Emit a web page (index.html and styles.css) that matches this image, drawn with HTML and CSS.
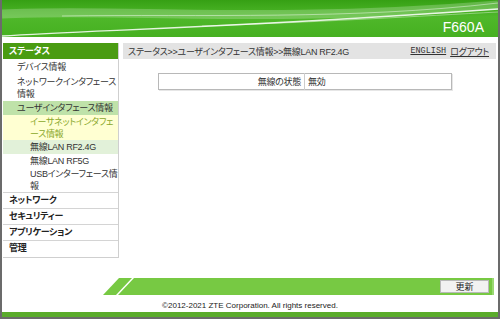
FILE: index.html
```html
<!DOCTYPE html>
<html lang="ja">
<head>
<meta charset="utf-8">
<title>F660A</title>
<link rel="stylesheet" href="styles.css">
</head>
<body>
<div class="frame">
  <header class="top">
    <svg class="swoosh" width="496" height="37" viewBox="0 0 496 37" preserveAspectRatio="none" aria-hidden="true">
      <defs>
        <linearGradient id="hg" x1="0" y1="0" x2="0" y2="1">
          <stop offset="0" stop-color="#36a014"/>
          <stop offset="0.45" stop-color="#4fb82a"/>
          <stop offset="1" stop-color="#46b021"/>
        </linearGradient>
      </defs>
      <rect width="496" height="37" fill="url(#hg)"/>
      <path d="M0 14 C120 8 260 24 496 5" stroke="#ffffff" stroke-opacity="0.22" stroke-width="9" fill="none"/>
      <path d="M60 16 C200 14 350 20 496 3" stroke="#ffffff" stroke-opacity="0.45" stroke-width="1" fill="none"/>
      <path d="M0 36 C90 30 230 28 496 9" stroke="#ffffff" stroke-opacity="0.85" stroke-width="1.3" fill="none"/>
      <path d="M200 26 C320 22 420 16 496 12" stroke="#ffffff" stroke-opacity="0.4" stroke-width="1" fill="none"/>
    </svg>
    <span class="model">F660A</span>
  </header>

  <div class="main">
    <nav class="side">
      <div class="sec-head">ステータス</div>
      <div class="sub first">デバイス情報</div>
      <div class="sub">ネットワークインタフェース<br>情報</div>
      <div class="sub sub-open">ユーザインタフェース情報</div>
      <div class="subsub subsub-hl tight">イーサネットインタフェ<br>ース情報</div>
      <div class="subsub subsub-cur">無線LAN RF2.4G</div>
      <div class="subsub tight">無線LAN RF5G</div>
      <div class="subsub tight">USBインターフェース情<br>報</div>
      <div class="top-item">ネットワーク</div>
      <div class="top-item">セキュリティー</div>
      <div class="top-item">アプリケーション</div>
      <div class="top-item">管理</div>
    </nav>

    <section class="content">
      <div class="crumb">
        <span class="path">ステータス&gt;&gt;ユーザインタフェース情報&gt;&gt;無線LAN RF2.4G</span>
        <span class="links"><a class="lang">ENGLISH</a><a class="logout">ログアウト</a></span>
      </div>
      <table class="info">
        <tr>
          <td class="lbl">無線の状態</td>
          <td class="val">無効</td>
        </tr>
      </table>
    </section>
  </div>

  <div class="footbar">
    <svg class="slant" width="32" height="17" viewBox="0 0 32 17" aria-hidden="true">
      <polygon points="0,17 16,0 29,0 13,17" fill="#77c943"/>
      <polygon points="15,17 31,0 32,0 32,17" fill="#77c943"/>
    </svg>
    <div class="bar">
      <button class="refresh">更新</button>
    </div>
  </div>

  <div class="copy">©2012-2021 ZTE Corporation. All rights reserved.</div>
  <div class="bottomline"></div>
</div>
</body>
</html>
```

FILE: styles.css
```css
* { box-sizing: border-box; }

html, body {
  margin: 0;
  padding: 0;
  background: #ffffff;
}

body {
  font-family: "Liberation Sans", "Noto Sans CJK JP", sans-serif;
  font-size: 9px;
  letter-spacing: -0.3px;
  color: #333333;
  font-feature-settings: "palt";
}

.frame {
  width: 500px;
  height: 319px;
  border-left: 2px solid #6b6b6b;
  border-right: 2px solid #6b6b6b;
  border-bottom: 2px solid #6b6b6b;
  display: flex;
  flex-direction: column;
  overflow: hidden;
}

/* header */
.top {
  position: relative;
  height: 37px;
  flex: none;
  display: flex;
  justify-content: flex-end;
  align-items: flex-end;
  padding: 0 14px 3px 0;
}

.swoosh {
  position: absolute;
  left: 0;
  top: 0;
}

.model {
  position: relative;
  font-family: "Liberation Sans", Arial, sans-serif;
  font-size: 14px;
  line-height: 14px;
  letter-spacing: 0;
  color: #ffffff;
}

/* main area */
.main {
  margin-top: 6px;
  height: 215px;
  flex: none;
  display: flex;
  padding-left: 1px;
}

.side {
  width: 116px;
  flex: none;
  border-right: 1px solid #cfcfcf;
  border-bottom: 1px solid #cfcfcf;
  display: flex;
  flex-direction: column;
  white-space: nowrap;
  overflow: hidden;
}

.side > div { flex: none; }

.sec-head {
  height: 16px;
  line-height: 16px;
  padding-left: 6px;
  background: #4a9c12;
  color: #ffffff;
  font-weight: bold;
}

.sub,
.subsub {
  line-height: 12px;
  padding: 1px 0;
}

.sub.first { padding: 2px 0; }

.subsub.tight { padding: 1px 0 0; }

.sub { padding-left: 14px; }

.subsub { padding-left: 27px; }

.sub.first,
.sub { padding-left: 14px; }

.subsub.tight { padding-left: 27px; }

.sub-open { background: #bfe2a9; }

.subsub-hl {
  background: #ffffd2;
  color: #8aa82a;
}

.subsub-cur { background: #e2f1d9; }

.top-item {
  height: 16px;
  line-height: 15px;
  padding-left: 6px;
  border-top: 1px solid #d4d4d4;
  font-weight: bold;
  color: #222222;
}

.content {
  flex: 1;
  margin-left: 4px;
  margin-right: 2px;
  display: flex;
  flex-direction: column;
}

.crumb {
  height: 16px;
  background: #e3e3e3;
  display: flex;
  justify-content: space-between;
  align-items: center;
  padding: 0 7px 0 5px;
  white-space: nowrap;
}

.links {
  display: flex;
  gap: 4px;
  align-items: center;
}

.links a {
  text-decoration: underline;
  color: #333333;
}

.lang {
  font-family: "Liberation Mono", monospace;
  font-size: 8.5px;
  letter-spacing: 0;
}

.info {
  margin-top: 14px;
  margin-left: 35px;
  width: 294px;
  height: 17px;
  border-collapse: collapse;
  border: 1px solid #b8b8b8;
  box-shadow: 1px 1px 0 #e6e6e6;
}

.info td {
  padding: 0 3px;
  height: 15px;
  line-height: 12px;
}

.lbl {
  width: 146px;
  text-align: right;
  border-right: 1px solid #cccccc;
}

.val { text-align: left; }

/* footer */
.footbar {
  margin-top: 20px;
  height: 17px;
  flex: none;
  display: flex;
  padding-left: 101px;
  padding-right: 4px;
}

.slant { flex: none; display: block; }

.bar {
  flex: 1;
  background: #77c943;
  border-right: 2px solid #9ad873;
  display: flex;
  justify-content: flex-end;
  align-items: center;
  padding-right: 3px;
}

.refresh {
  width: 49px;
  height: 13px;
  padding: 0;
  margin: 0;
  font-family: "Noto Sans CJK JP", sans-serif;
  font-size: 9px;
  line-height: 11px;
  color: #222222;
  background: #f2f2f2;
  border: 1px solid #b9b9b9;
  border-radius: 0;
}

.copy {
  height: 17px;
  flex: none;
  padding-top: 5px;
  line-height: 12px;
  text-align: center;
  font-family: "Liberation Sans", Arial, sans-serif;
  font-size: 8px;
  letter-spacing: 0;
  color: #222222;
}

.bottomline {
  height: 5px;
  flex: none;
  background: #5aab2b;
}
```
